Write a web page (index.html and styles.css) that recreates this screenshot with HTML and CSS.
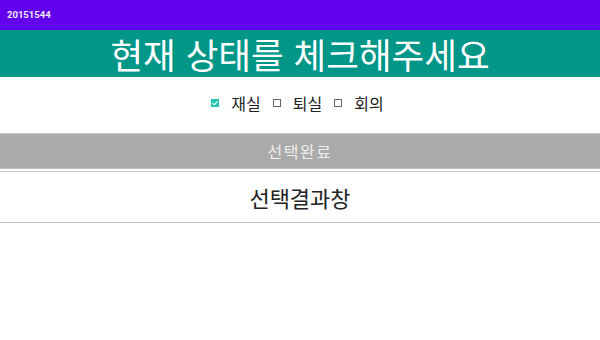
FILE: index.html
```html
<!DOCTYPE html>
<html lang="ko">

<head>
    <meta charset="UTF-8" />
    <meta name="viewport" content="width=device-width, initial-scale=1.0" />
    <link rel="stylesheet" href="styles.css">
    <title>20151544</title>
</head>

<body>
    <div class="status-bar">20151544</div>
    <div class="title-box">
        <h1>현재 상태를 체크해주세요</h1>
    </div>
    <div class="check-row">
        <label class="check-item"><span class="box checked"><svg viewBox="0 0 8 8" width="8" height="8">
                    <path d="M1.5 4.2 L3.2 5.8 L6.5 2.4" fill="none" stroke="#fff" stroke-width="1.1" />
                </svg></span>재실</label>
        <label class="check-item"><span class="box"></span>퇴실</label>
        <label class="check-item"><span class="box"></span>회의</label>
    </div>
    <button class="btn">선택완료</button>
    <div class="result">선택결과창</div>
</body>

</html>
```

FILE: styles.css
```css
* {
    margin: 0;
    padding: 0;
    box-sizing: border-box;
}

body {
    background-color: #ffffff;
    font-family: "Noto Sans CJK KR", "Noto Sans", sans-serif;
    color: #222222;
}

.status-bar {
    height: 30px;
    background-color: #6200ee;
    color: #f0eaff;
    font-family: Roboto, "Liberation Sans", sans-serif;
    font-weight: bold;
    font-size: 9.5px;
    line-height: 30px;
    padding-left: 7px;
}

.title-box {
    height: 47px;
    background-color: #009688;
    color: #ffffff;
    text-align: center;
}

.title-box h1 {
    font-weight: normal;
    font-size: 35.5px;
    line-height: 47px;
}

.check-row {
    height: 56px;
    display: flex;
    justify-content: center;
    align-items: center;
    gap: 12px;
    font-size: 16px;
    padding-right: 5px;
    padding-bottom: 4px;
}

.check-item {
    display: flex;
    align-items: center;
    gap: 12px;
}

.box {
    width: 8px;
    height: 8px;
    border: 1px solid #666666;
    display: inline-flex;
    align-items: center;
    justify-content: center;
}

.box.checked {
    border: none;
    background-color: #26c6b4;
}

.btn {
    display: block;
    width: 100%;
    height: 36px;
    border: none;
    border-top: 1px solid #c8c8c8;
    border-bottom: 1px solid #bdbdbd;
    background-color: #aaaaaa;
    color: #eeeeee;
    font-family: "Noto Sans CJK KR", sans-serif;
    font-size: 16px;
    letter-spacing: 1.5px;
}

.result {
    margin-top: 2px;
    height: 52px;
    border-top: 1px solid #cccccc;
    border-bottom: 1px solid #bbbbbb;
    text-align: center;
    font-size: 22px;
    line-height: 50px;
}
```
